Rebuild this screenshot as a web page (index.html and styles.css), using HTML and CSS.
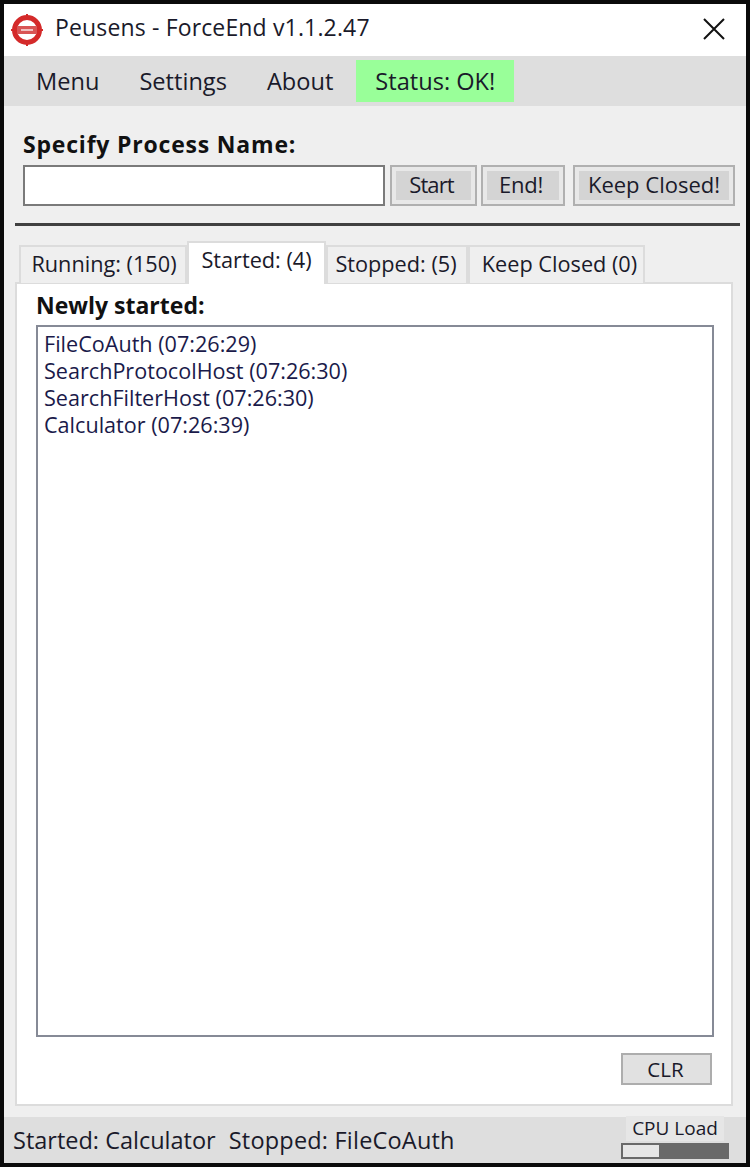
FILE: index.html
```html
<!DOCTYPE html>
<html lang="en">
<head>
  <meta charset="UTF-8" />
  <meta name="viewport" content="width=device-width, initial-scale=1.0"/>
  <title>Peusens - ForceEnd</title>
  <link rel="stylesheet" href="styles.css">
</head>
<body>
  <div class="window">
    <div class="titlebar">
      <svg class="app-icon" width="34" height="34" viewBox="0 0 34 34">
        <path d="M17 1 V4 M17 30 V33 M1 17 H4 M30 17 H33" stroke="#d42a2a" stroke-width="2" fill="none"/>
        <circle cx="17" cy="17" r="12.5" fill="#fff" stroke="#d42a2a" stroke-width="5"/>
        <rect x="7" y="13" width="20" height="8" fill="#d95555"/>
        <rect x="11" y="16" width="12" height="2" fill="#f0c0c0"/>
      </svg>
      <span class="title">Peusens - ForceEnd v1.1.2.47</span>
      <svg class="close" width="24" height="24" viewBox="0 0 24 24">
        <path d="M2 2 L22 22 M22 2 L2 22" stroke="#111" stroke-width="2" fill="none"/>
      </svg>
    </div>

    <div class="menubar">
      <a class="menu-item">Menu</a>
      <a class="menu-item">Settings</a>
      <a class="menu-item">About</a>
      <a class="menu-item status-ok">Status: OK!</a>
    </div>

    <div class="process">
      <label class="bold-label process-label">Specify Process Name:</label>
      <div class="process-row">
        <input type="text" class="process-input" />
        <button class="btn btn-start">Start</button>
        <button class="btn btn-end">End!</button>
        <button class="btn btn-keep">Keep Closed!</button>
      </div>
    </div>

    <div class="separator"></div>

    <div class="tabs">
      <div class="tab tab-running">Running: (150)</div>
      <div class="tab tab-started active">Started: (4)</div>
      <div class="tab tab-stopped">Stopped: (5)</div>
      <div class="tab tab-closed">Keep Closed (0)</div>
    </div>

    <div class="panel">
      <div class="bold-label panel-label">Newly started:</div>
      <div class="listbox">
        <div>FileCoAuth (07:26:29)</div>
        <div>SearchProtocolHost (07:26:30)</div>
        <div>SearchFilterHost (07:26:30)</div>
        <div>Calculator (07:26:39)</div>
      </div>
      <div class="panel-foot">
        <button class="clr">CLR</button>
      </div>
    </div>

    <div class="statusbar">
      <span class="status-text">Started: Calculator</span>
      <span class="status-text status-stopped">Stopped: FileCoAuth</span>
      <div class="cpu">
        <div class="cpu-label">CPU Load</div>
        <div class="cpu-bar"><div class="cpu-fill" style="width: 35%"></div></div>
      </div>
    </div>
  </div>
</body>
</html>
```

FILE: styles.css
```css
html, body {
  margin: 0;
  padding: 0;
}
body {
  background: #0a0a0a;
  font-family: "Open Sans", "Noto Sans", sans-serif;
  color: #1a1a2a;
  height: 1167px;
  overflow: hidden;
}
.window {
  margin: 4px;
  width: 742px;
  height: 1159px;
  background: #efefef;
  display: flex;
  flex-direction: column;
}
.titlebar {
  height: 52px;
  background: white;
  display: flex;
  align-items: center;
  padding-left: 6px;
}
.app-icon {
  flex: none;
  margin-top: -1px;
}
.title {
  font-size: 23px;
  letter-spacing: 0.15px;
  margin-left: 11px;
  margin-top: -7px;
}
.close {
  margin-left: auto;
  margin-right: 20px;
  margin-top: -2px;
}
.menubar {
  height: 50px;
  background: #dedede;
  display: flex;
  align-items: center;
  padding-left: 12px;
  box-sizing: border-box;
}
.menu-item {
  font-size: 23.6px;
  padding: 0 20px;
  line-height: 42px;
}
.status-ok {
  background: #99ff99;
  width: 158px;
  box-sizing: border-box;
  padding: 0 19px;
  margin-left: 3px;
  white-space: nowrap;
}
.process {
  padding: 23px 11px 0 19px;
}
.bold-label {
  display: block;
  font-size: 23px;
  font-weight: 700;
  color: #111;
  line-height: 30px;
}
.process-label {
  letter-spacing: 0.8px;
}
.process-row {
  display: flex;
  margin-top: 6px;
  height: 41px;
}
.process-input {
  width: 362px;
  box-sizing: border-box;
  border: 2px solid #7a7a7a;
  background: white;
  padding: 0;
  margin: 0;
}
.btn {
  box-sizing: border-box;
  border: 2px solid #b0b0b0;
  outline: none;
  background: #d4d4d4;
  box-shadow: inset 0 0 0 4px #e8e8e8;
  font-family: inherit;
  font-size: 22px;
  color: #1a1a2a;
  padding: 0 0 4px 0;
  margin: 0;
}
.btn-start {
  width: 87px;
  margin-left: 5px;
  padding-right: 4px;
  letter-spacing: -0.9px;
}
.btn-end {
  width: 84px;
  margin-left: 4px;
  padding-right: 4px;
  letter-spacing: -0.2px;
}
.btn-keep {
  width: 162px;
  margin-left: 8px;
}
.separator {
  height: 3px;
  background: #404040;
  margin: 17px 6px 0 11px;
}
.tabs {
  display: flex;
  align-items: flex-end;
  margin-top: 15px;
  padding-left: 15px;
  height: 42px;
  position: relative;
  z-index: 1;
}
.tab {
  box-sizing: border-box;
  height: 38px;
  border: 2px solid #dcdcdc;
  border-bottom: none;
  font-size: 21.7px;
  line-height: 33px;
  text-align: center;
  background: #efefef;
  white-space: nowrap;
}
.tab-running {
  width: 168px;
  padding-left: 2px;
}
.tab-started {
  width: 139px;
}
.tab-stopped {
  width: 142px;
  padding-right: 2px;
}
.tab-closed {
  width: 177px;
  padding-left: 6px;
}
.tab.active {
  height: 43px;
  background: white;
  line-height: 33px;
  margin-bottom: -1px;
}
.panel {
  width: 718px;
  height: 824px;
  box-sizing: border-box;
  border: 2px solid #dcdcdc;
  background: white;
  padding: 6px 0 0 19px;
  margin: -1px 13px 0 11px;
}
.panel-label {
  margin-bottom: 5px;
}
.listbox {
  box-sizing: border-box;
  width: 678px;
  height: 712px;
  border: 2px solid #868a96;
  padding: 3px 0 0 6px;
  font-size: 21.6px;
  line-height: 27px;
  color: #1a1a4a;
}
.panel-foot {
  display: flex;
  justify-content: flex-end;
  padding: 16px 2px 0 0;
  width: 678px;
  box-sizing: border-box;
}
.clr {
  width: 91px;
  height: 32px;
  box-sizing: border-box;
  border: 2px solid #adadad;
  background: #e1e1e1;
  font-family: inherit;
  font-size: 20.5px;
  color: #1a1a2a;
  padding: 0 2px 0 0;
}
.statusbar {
  margin-top: 11px;
  height: 46px;
  background: #dedede;
  display: flex;
  align-items: center;
  padding-left: 9px;
  gap: 13px;
}
.status-text {
  font-size: 23.5px;
  white-space: nowrap;
  margin-top: -1px;
}
.status-stopped {
  letter-spacing: 0.2px;
}
.cpu {
  margin-left: auto;
  margin-right: 17px;
  width: 108px;
  display: flex;
  flex-direction: column;
  align-items: center;
  margin-top: -4px;
}
.cpu-label {
  width: 98px;
  height: 25px;
  margin-top: -2px;
  background: #e6e6e6;
  font-size: 19px;
  line-height: 24px;
  text-align: center;
  white-space: nowrap;
}
.cpu-bar {
  width: 108px;
  height: 16px;
  margin-top: 2px;
  box-sizing: border-box;
  border: 2px solid #696969;
  background: #696969;
}
.cpu-fill {
  height: 100%;
  background: #e6e6e6;
}
```
